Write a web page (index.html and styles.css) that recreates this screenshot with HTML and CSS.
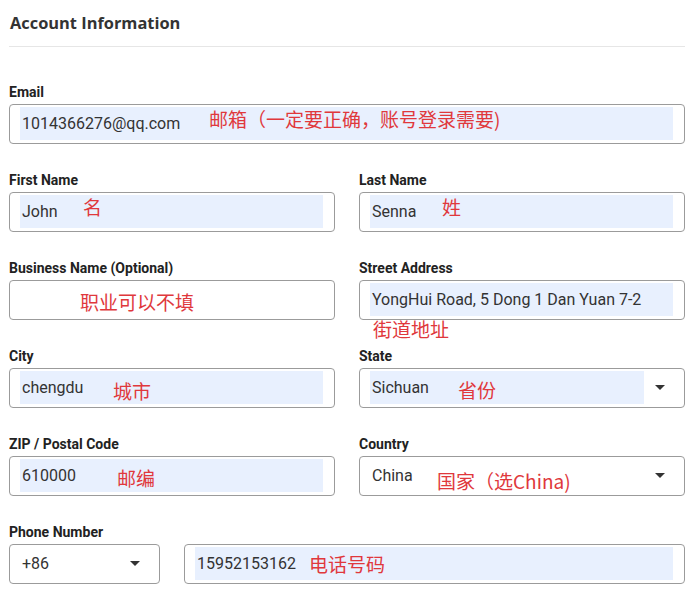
FILE: index.html
```html
<!DOCTYPE html>
<html lang="en">
<head>
<meta charset="UTF-8">
<title>Account Information</title>
<link rel="stylesheet" href="styles.css">
</head>
<body>

<div class="form">
  <h2 class="title">Account Information</h2>

  <div class="grid">
    <div class="field wide">
      <label class="label">Email</label>
      <div class="box">
        <span class="fill">1014366276@qq.com</span>
        <span class="note note-email">邮箱（一定要正确，账号登录需要)</span>
      </div>
    </div>

    <div class="field">
      <label class="label">First Name</label>
      <div class="box">
        <span class="fill">John</span>
        <span class="note note-first">名</span>
      </div>
    </div>
    <div class="field">
      <label class="label">Last Name</label>
      <div class="box">
        <span class="fill">Senna</span>
        <span class="note note-last">姓</span>
      </div>
    </div>

    <div class="field">
      <label class="label">Business Name (Optional)</label>
      <div class="box">
        <span class="value"></span>
        <span class="note note-business">职业可以不填</span>
      </div>
    </div>
    <div class="field">
      <label class="label">Street Address</label>
      <div class="box">
        <span class="fill">YongHui Road, 5 Dong 1 Dan Yuan 7-2</span>
        <span class="note note-street">街道地址</span>
      </div>
    </div>

    <div class="field">
      <label class="label">City</label>
      <div class="box">
        <span class="fill">chengdu</span>
        <span class="note note-city">城市</span>
      </div>
    </div>
    <div class="field">
      <label class="label">State</label>
      <div class="box select">
        <span class="fill">Sichuan</span>
        <span class="caret"></span>
        <span class="note note-state">省份</span>
      </div>
    </div>

    <div class="field">
      <label class="label">ZIP / Postal Code</label>
      <div class="box">
        <span class="fill">610000</span>
        <span class="note note-zip">邮编</span>
      </div>
    </div>
    <div class="field">
      <label class="label">Country</label>
      <div class="box select">
        <span class="value">China</span>
        <span class="caret"></span>
        <span class="note note-country">国家（选China)</span>
      </div>
    </div>

    <div class="field wide">
      <label class="label">Phone Number</label>
      <div class="phone-row">
        <div class="box select code">
          <span class="value">+86</span>
          <span class="caret"></span>
        </div>
        <div class="box number">
          <span class="fill">15952153162</span>
          <span class="note note-phone">电话号码</span>
        </div>
      </div>
    </div>
  </div>
</div>

</body>
</html>
```

FILE: styles.css
```css
body {
  margin: 0;
  background: #ffffff;
  font-family: Roboto, "Liberation Sans", sans-serif;
  color: #222;
}

.form {
  width: 676px;
  padding: 0 0 0 9px;
}

.title {
  font-family: "Open Sans", "Liberation Sans", sans-serif;
  font-size: 16.4px;
  font-weight: 700;
  line-height: 22px;
  color: #333;
  margin: 0;
  padding: 12px 0 12px 1px;
  border-bottom: 1px solid #e6e6e6;
}

.grid {
  display: grid;
  grid-template-columns: 1fr 1fr;
  column-gap: 24px;
  row-gap: 29px;
  margin-top: 38px;
}

.wide {
  grid-column: 1 / -1;
}

.field {
  display: flex;
  flex-direction: column;
  gap: 5px;
}

.label {
  font-size: 14px;
  font-weight: 700;
  line-height: 14px;
  color: #222;
}

.box {
  position: relative;
  display: flex;
  align-items: stretch;
  height: 40px;
  box-sizing: border-box;
  border: 1px solid #9b9b9b;
  border-radius: 4px;
  padding: 2px 11px 3px 10px;
  font-size: 16px;
  color: #333;
}

.fill,
.value {
  flex: 1;
  display: flex;
  align-items: center;
  padding-left: 2px;
}

.fill {
  background: #e8f0fe;
}

.select {
  padding-right: 0;
}

.caret {
  width: 59px;
  display: flex;
  align-items: center;
  justify-content: flex-end;
  padding-right: 19px;
  box-sizing: border-box;
  flex: none;
}

.select .fill {
  margin-right: -19px;
}

.caret::after {
  content: "";
  border-left: 5px solid transparent;
  border-right: 5px solid transparent;
  border-top: 5px solid #333;
}

.phone-row {
  display: flex;
  gap: 24px;
}

.code {
  width: 151px;
  flex: none;
}

.number {
  flex: 1;
}

/* red hand-written hints laid over the screenshot */
.note {
  position: absolute;
  font-family: "Noto Sans CJK SC", "Noto Sans", sans-serif;
  font-size: 19px;
  line-height: 20px;
  color: #e0383c;
  white-space: nowrap;
}

.note-email { left: 199px; top: 4px; }
.note-first { left: 73px; top: 4px; }
.note-last { left: 82px; top: 4px; }
.note-business { left: 70px; top: 11px; }
.note-street { left: 13px; top: 38px; }
.note-city { left: 103px; top: 12px; }
.note-state { left: 98px; top: 11px; }
.note-zip { left: 107px; top: 11px; }
.note-country { left: 77px; top: 14px; }
.note-phone { left: 124px; top: 9px; }
```
